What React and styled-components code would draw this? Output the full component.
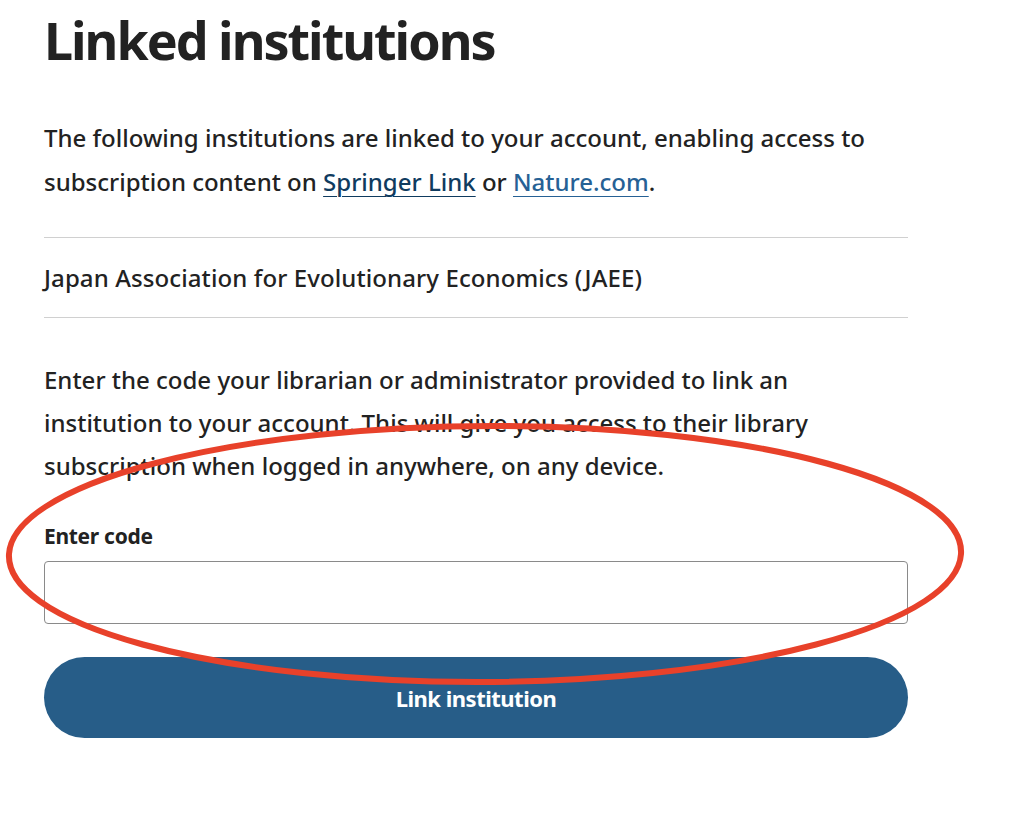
import styled, { createGlobalStyle } from "styled-components";

const GlobalStyle = createGlobalStyle`
  html, body {
    margin: 0;
    padding: 0;
    background: #ffffff;
  }
  body {
    font-family: "Noto Sans", "Open Sans", sans-serif;
    color: #222222;
  }
`;

const Page = styled.div`
  position: relative;
  width: 1024px;
  height: 829px;
  overflow: hidden;
  background: #fff;
`;

const Content = styled.main`
  width: 864px;
  padding: 8px 0 0 44px;
  display: flex;
  flex-direction: column;
`;

const Title = styled.h1`
  margin: 0;
  font-size: 52px;
  line-height: 64px;
  font-weight: 700;
  letter-spacing: -2px;
  color: #222;
`;

const Text = styled.p`
  margin: ${(p) => p.margin || "0"};
  font-size: 24px;
  line-height: ${(p) => p.lh || "44px"};
  font-weight: 500;
  color: #222;
  white-space: nowrap;
`;

const Anchor = styled.a`
  color: ${(p) => p.color};
  text-decoration: underline;
  text-decoration-thickness: 1px;
  text-underline-offset: 5px;
`;

const InstitutionList = styled.ul`
  list-style: none;
  margin: 33px 0 0;
  padding: 0;
  border-top: 1px solid #d0d0d0;
`;

const Institution = styled.li`
  border-bottom: 1px solid #d0d0d0;
  font-size: 24px;
  line-height: 79px;
  font-weight: 500;
  letter-spacing: 0.1px;
  color: #222;
`;

const Form = styled.form`
  display: flex;
  flex-direction: column;
  margin-top: 40px;
`;

const Label = styled.label`
  margin-top: 34px;
  font-size: 21px;
  line-height: 30px;
  font-weight: 700;
  letter-spacing: -0.3px;
  color: #222;
`;

const Input = styled.input`
  box-sizing: border-box;
  margin-top: 10px;
  width: 864px;
  height: 63px;
  border: 1px solid #8a8a8a;
  border-radius: 4px;
  font-size: 22px;
  padding: 0 16px;
  outline: none;
`;

const Button = styled.button`
  margin-top: 33px;
  width: 864px;
  height: 81px;
  border: none;
  border-radius: 41px;
  background: #275d88;
  color: #fff;
  font-family: "Noto Sans", sans-serif;
  font-size: 22px;
  font-weight: 700;
  letter-spacing: -0.5px;
  cursor: pointer;
`;

const Annotation = styled.svg`
  position: absolute;
  left: 0;
  top: 0;
  pointer-events: none;
`;

export default function App() {
  return (
    <Page>
      <GlobalStyle />
      <Content>
        <Title>Linked institutions</Title>
        <Text margin="44px 0 0">
          The following institutions are linked to your account, enabling access to
          <br />
          subscription content on{" "}
          <Anchor href="#" color="#0f3b5f">Springer Link</Anchor> or{" "}
          <Anchor href="#" color="#266195">Nature.com</Anchor>.
        </Text>
        <InstitutionList>
          <Institution>Japan Association for Evolutionary Economics (JAEE)</Institution>
        </InstitutionList>
        <Form onSubmit={(e) => e.preventDefault()}>
          <Text lh="43px">
            Enter the code your librarian or administrator provided to link an
            <br />
            institution to your account. This will give you access to their library
            <br />
            subscription when logged in anywhere, on any device.
          </Text>
          <Label htmlFor="code">Enter code</Label>
          <Input id="code" type="text" />
          <Button type="submit">Link institution</Button>
        </Form>
      </Content>
      <Annotation width="1024" height="829" viewBox="0 0 1024 829">
        <ellipse
          cx="485"
          cy="554"
          rx="476"
          ry="128"
          fill="none"
          stroke="#e8412a"
          strokeWidth="6"
          transform="translate(485 554) skewX(-3.5) translate(-485 -554)"
        />
      </Annotation>
    </Page>
  );
}
